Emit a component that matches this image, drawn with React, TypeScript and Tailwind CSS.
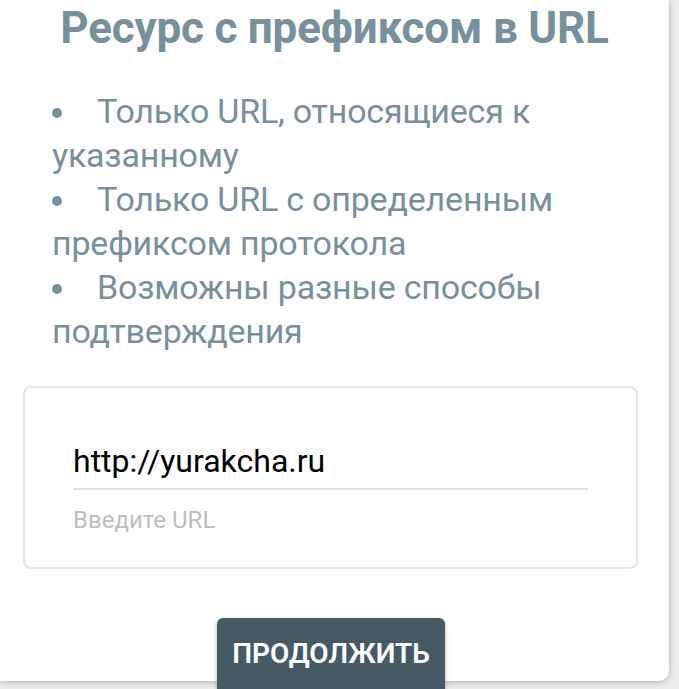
import React from "react";

export default function App() {
  const items = [
    "Только URL, относящиеся к указанному",
    "Только URL с определенным префиксом протокола",
    "Возможны разные способы подтверждения",
  ];
  return (
    <div className="w-[679px] h-[689px] overflow-hidden bg-[#ececec]" style={{ fontFamily: "Roboto, 'Noto Sans', sans-serif" }}>
      <div className="relative w-[669px] h-[681px] bg-white rounded-br-[10px] shadow-[0_1px_6px_rgba(0,0,0,0.25)]">
        <h1 className="pt-[2px] text-center text-[44px] leading-[52px] font-bold text-[#78909c] tracking-[-0.2px]">
          Ресурс с префиксом в URL
        </h1>
        <ul className="mt-[35px] pl-[52px] pr-[40px] text-[#78909c] text-[34px] leading-[44px] tracking-[-0.2px]">
          {items.map((t) => (
            <li key={t}>
              <span className="inline-block w-[10px] h-[10px] rounded-full bg-[#78909c] align-middle mr-[35px] -mt-[2px]"></span>
              {t}
            </li>
          ))}
        </ul>
        <div className="mt-[33px] ml-[23px] w-[615px] h-[183px] rounded-[8px] border-2 border-[#e4e4e4] px-[48px] pt-[53px]">
          <div className="text-[32px] leading-[40px] text-black border-b-2 border-[#e0e0e0] pb-[7px]">
            http://yurakcha.ru
          </div>
          <div className="mt-[16px] text-[24px] leading-[28px] text-[#bdbdbd]">Введите URL</div>
        </div>
        <div className="mt-[49px] flex justify-center pr-[7px]">
          <button className="w-[228px] h-[76px] rounded-[6px] bg-[#455a64] text-white text-[28px] font-semibold pb-[4px] shadow-[0_2px_4px_rgba(0,0,0,0.3)]">
            ПРОДОЛЖИТЬ
          </button>
        </div>
      </div>
    </div>
  );
}
